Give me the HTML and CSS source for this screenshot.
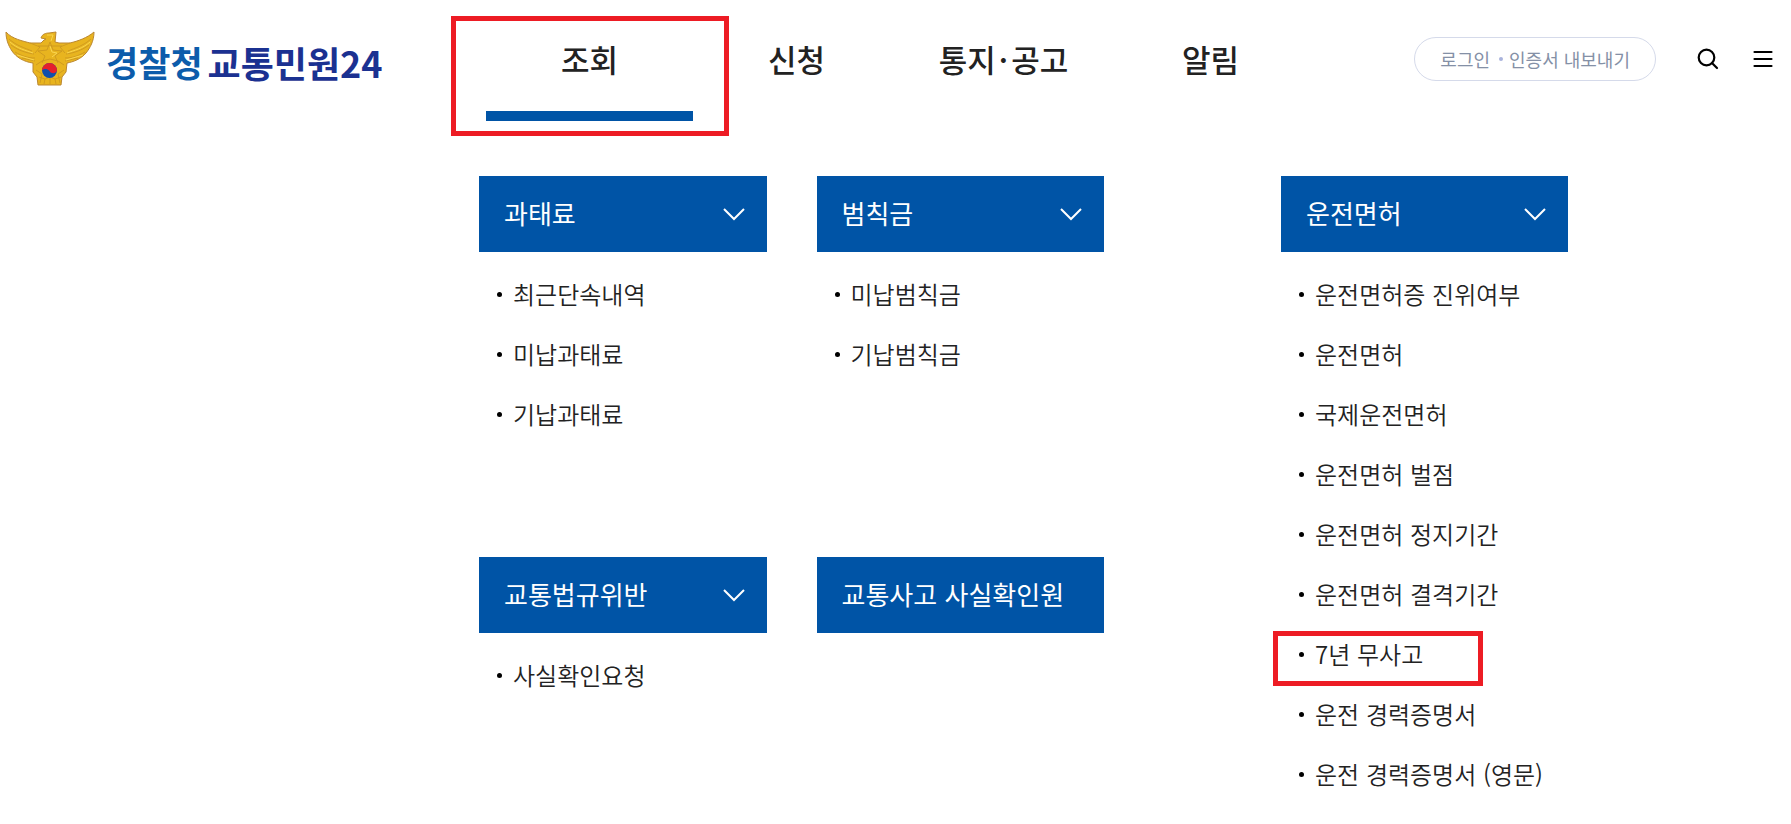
FILE: index.html
```html
<!DOCTYPE html>
<html lang="ko">
<head>
<meta charset="utf-8">
<meta name="viewport" content="width=device-width, initial-scale=1">
<title>경찰청 교통민원24</title>
<link rel="stylesheet" href="styles.css">
</head>
<body>
<header class="header">
  <a class="logo" href="#">
    <svg class="emblem" viewBox="0 0 90 56" aria-hidden="true">
      <path fill="#e8b41f" stroke="#bb8730" stroke-width="1" stroke-linejoin="round" d="M1 1C7 8 18 10 25 12L36 12L39 9L41 8L36 7C37 3 41 2 44 2L51 1L50 11L54 12L65 12C73 10 82 7 89 1C89 10 85 17 81 22C76 28 68 31 62 32L61 41L57 46L56 54L33 54L32 46L28 41L28 32C19 31 11 26 7 20C3 14 1 8 1 1Z"/>
      <path fill="none" stroke="#c99420" stroke-width="0.800" d="M4 8C12 15 20 17 27 20M6 14C14 20 22 22 29 23M10 21C17 25 23 27 30 27M17 27L30 30M86 8C78 15 70 17 63 20M84 14C76 20 68 22 61 23M80 21C73 25 67 27 60 27M73 27L60 30M25 12L35 16L30 22M65 12L55 16L60 22M33 15L57 15M45 11L48 19L57 20L50 25L53 32M45 11L42 19L33 20L40 25L37 32M31 34L37 30L45 28L53 30L59 34M31 39L37 43L35 52M59 39L53 43L55 52M40 48L39 53M45 47V53M50 48L51 53M34 46L40 48L45 46L50 48L56 46"/>
      <path fill="none" stroke="#f9d54f" stroke-width="1" d="M5 11C13 18 20 19 28 22M85 11C77 18 70 19 62 22M12 24L29 29M78 24L61 29M45 15L47 21L52 22L47 26M42 4H48L46 10"/>
      <circle cx="44.500" cy="39.500" r="7.500" fill="#104fae"/>
      <path fill="#e51f2c" d="M37 39.500A7.500 7.500 0 0 1 52 39.500C51 43 46 43 44.500 40C42 37 38 38 37 39.500Z"/>
    </svg>
    <span class="logo-text"><span class="logo-agency">경찰청</span><span class="logo-service">교통민원24</span></span>
  </a>
  <nav class="nav" aria-label="주 메뉴">
    <a class="nav-item active marked" href="#">조회</a>
    <a class="nav-item" href="#">신청</a>
    <a class="nav-item" href="#">통지<span class="nav-dot">·</span>공고</a>
    <a class="nav-item" href="#">알림</a>
  </nav>
  <div class="tools">
    <div class="account">
      <a href="#">로그인</a><span class="account-dot"></span><a href="#">인증서 내보내기</a>
    </div>
    <button class="icon-button search" type="button" aria-label="검색">
      <svg viewBox="0 0 22 22" width="22" height="22"><circle cx="9.500" cy="9.500" r="7.800"/><path d="M15 15L20 20"/></svg>
    </button>
    <button class="icon-button" type="button" aria-label="전체 메뉴">
      <svg viewBox="0 0 20 20" width="20" height="20"><path d="M1.500 3H18.500M1.500 10H18.500M1.500 17H18.500"/></svg>
    </button>
  </div>
</header>
<main class="menu">
  <div class="menu-pair">
    <section class="group">
      <button class="group-head" type="button">과태료<svg class="chevron" viewBox="0 0 22 14"><path d="M1 2L11 12L21 2"/></svg></button>
      <ul class="links">
        <li><a href="#">최근단속내역</a></li>
        <li><a href="#">미납과태료</a></li>
        <li><a href="#">기납과태료</a></li>
      </ul>
    </section>
    <section class="group">
      <button class="group-head" type="button">범칙금<svg class="chevron" viewBox="0 0 22 14"><path d="M1 2L11 12L21 2"/></svg></button>
      <ul class="links">
        <li><a href="#">미납범칙금</a></li>
        <li><a href="#">기납범칙금</a></li>
      </ul>
    </section>
    <section class="group">
      <button class="group-head" type="button">교통법규위반<svg class="chevron" viewBox="0 0 22 14"><path d="M1 2L11 12L21 2"/></svg></button>
      <ul class="links">
        <li><a href="#">사실확인요청</a></li>
      </ul>
    </section>
    <section class="group">
      <a class="group-head" href="#">교통사고 사실확인원</a>
    </section>
  </div>
  <section class="group">
    <button class="group-head" type="button">운전면허<svg class="chevron" viewBox="0 0 22 14"><path d="M1 2L11 12L21 2"/></svg></button>
    <ul class="links">
      <li><a href="#">운전면허증 진위여부</a></li>
      <li><a href="#">운전면허</a></li>
      <li><a href="#">국제운전면허</a></li>
      <li><a href="#">운전면허 벌점</a></li>
      <li><a href="#">운전면허 정지기간</a></li>
      <li><a href="#">운전면허 결격기간</a></li>
      <li class="marked"><a href="#">7년 무사고</a></li>
      <li><a href="#">운전 경력증명서</a></li>
      <li><a href="#">운전 경력증명서 (영문)</a></li>
    </ul>
  </section>
</main>
</body>
</html>
```
FILE: styles.css
```css
:root {
  --blue: #0054a6;
  --red: #ed1c24;
  --ink: #222;
}

*,
*::before,
*::after {
  box-sizing: border-box;
}

body {
  margin: 0;
  background: #fff;
  color: var(--ink);
  font-family: "Noto Sans CJK KR", "Noto Sans", sans-serif;
}

a {
  color: inherit;
  text-decoration: none;
}

button {
  border: 0;
  padding: 0;
  background: none;
  font: inherit;
  cursor: pointer;
}

.header {
  display: grid;
  grid-template-columns: 486fr 828fr 477fr;
}

.logo {
  display: flex;
  align-items: center;
  gap: 11px;
  padding-left: 5px;
  height: 118px;
}

.emblem {
  width: 90px;
  height: 56px;
  flex: none;
}

.logo-text {
  display: flex;
  gap: 5px;
  padding-top: 6px;
  font-size: 36px;
  line-height: 40px;
  font-weight: 700;
  white-space: nowrap;
}

.logo-agency {
  color: #0c5cab;
  font-size: 35px;
}

.logo-service {
  color: #1b3191;
}

.nav {
  display: grid;
  grid-template-columns: repeat(4, 1fr);
}

.nav-item {
  position: relative;
  height: 121px;
  padding-top: 39px;
  border-bottom: 10px solid transparent;
  font-size: 31px;
  line-height: 40px;
  font-weight: 500;
  text-align: center;
  white-space: nowrap;
}

.nav-item.active {
  border-bottom-color: var(--blue);
}

.nav-dot {
  margin: 0 3px;
}

.marked::after {
  content: "";
  position: absolute;
  border: 5px solid var(--red);
  pointer-events: none;
}

.nav-item.marked::after {
  inset: 16px -36px -25px -35px;
}

.tools {
  display: flex;
  align-items: center;
  justify-content: flex-end;
  height: 118px;
  padding-right: 18px;
}

.account {
  display: flex;
  align-items: center;
  height: 44px;
  padding: 0 25px 1px;
  border: 1px solid #d5daea;
  border-radius: 22px;
  color: #8490a6;
  font-size: 18px;
  line-height: 24px;
  white-space: nowrap;
}

.account-dot {
  width: 4px;
  height: 4px;
  margin: 0 6px 0 9px;
  border-radius: 50%;
  background: #a9b3dc;
}

.icon-button {
  display: flex;
  margin-left: 34px;
}

.icon-button.search {
  margin-left: 41px;
}

.icon-button svg {
  fill: none;
  stroke: #000;
  stroke-width: 2.2;
  stroke-linecap: round;
}

.menu {
  display: grid;
  grid-template-columns: 625fr 287fr;
  gap: 177px;
  margin: 55px 223px 0 479px;
}

.menu-pair {
  display: grid;
  grid-template-columns: 1fr 1fr;
  align-content: start;
  gap: 112px 50px;
}

.group-head {
  display: flex;
  align-items: center;
  justify-content: space-between;
  width: 100%;
  height: 76px;
  padding: 0 22px 2px 25px;
  background: var(--blue);
  color: #fff;
  font-size: 26px;
  line-height: 36px;
  white-space: nowrap;
}

.chevron {
  width: 22px;
  height: 14px;
  margin-top: 2px;
  fill: none;
  stroke: #fff;
  stroke-width: 2;
}

.links {
  margin: 0;
  padding: 13px 0 0;
  list-style: none;
}

.links li {
  display: flex;
  align-items: center;
  gap: 11px;
  position: relative;
  height: 60px;
  padding: 0 0 2px 18px;
  font-size: 24px;
  line-height: 36px;
  font-weight: 350;
  white-space: nowrap;
}

.links li::before {
  content: "";
  width: 5px;
  height: 5px;
  border-radius: 50%;
  background: #000;
}

.links .marked::after {
  top: 6px;
  bottom: -1px;
  left: -8px;
  width: 210px;
}
```
